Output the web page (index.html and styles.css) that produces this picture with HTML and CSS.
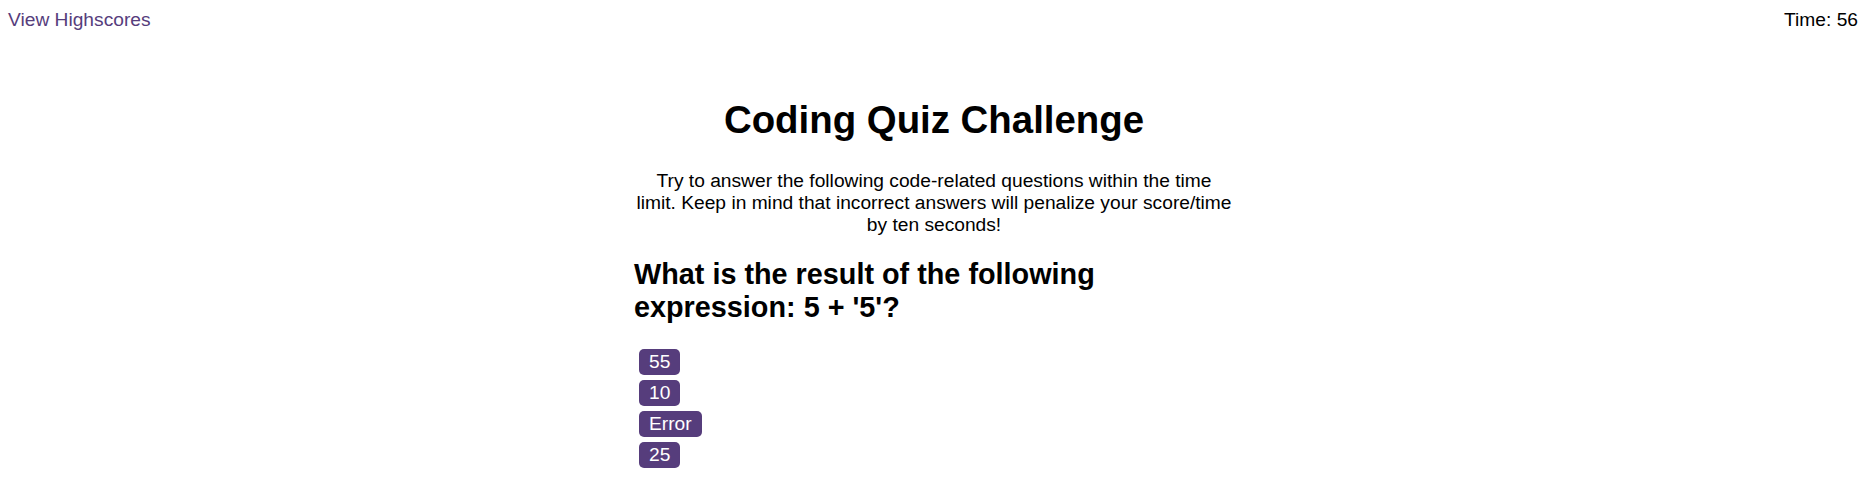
FILE: index.html
```html
<!DOCTYPE html>
<html lang="en">
<head>
<meta charset="utf-8">
<title>Coding Quiz Challenge</title>
<link rel="stylesheet" href="styles.css">
</head>
<body>
<header class="topbar">
  <a class="highscores" href="#">View Highscores</a>
  <div class="timer">Time: <span>56</span></div>
</header>
<main class="quiz">
  <h1 class="quiz-title">Coding Quiz Challenge</h1>
  <p class="quiz-intro">Try to answer the following code-related questions within the time limit. Keep in mind that incorrect answers will penalize your score/time by ten seconds!</p>
  <h2 class="question">What is the result of the following expression: 5 + '5'?</h2>
  <div class="answers">
    <button class="answer">55</button>
    <button class="answer">10</button>
    <button class="answer">Error</button>
    <button class="answer">25</button>
  </div>
</main>
</body>
</html>
```
FILE: styles.css
```css
* { box-sizing: border-box; }

html, body {
  margin: 0;
  padding: 0;
  background: #ffffff;
}

body {
  font-family: "Liberation Sans", Arial, sans-serif;
  font-size: 19.2px;
  color: #000000;
}

.topbar {
  display: flex;
  justify-content: space-between;
  align-items: flex-start;
  padding: 9px 10px 0 8px;
  line-height: 22px;
}

.highscores {
  color: #563d7c;
  text-decoration: none;
}

.timer {
  color: #000000;
}

.quiz {
  width: 600px;
  margin: 0 auto;
  padding-top: 67px;
}

.quiz-title {
  margin: 0 0 28px;
  font-size: 38.4px;
  font-weight: bold;
  line-height: 44px;
  text-align: center;
}

.quiz-intro {
  margin: 0 0 22px;
  padding: 0 2px;
  line-height: 22px;
  text-align: center;
}

.question {
  margin: 0 0 25px;
  font-size: 28.8px;
  font-weight: bold;
  line-height: 33px;
  text-align: left;
  width: 480px;
}

.answers {
  display: flex;
  flex-direction: column;
  align-items: flex-start;
  gap: 5px;
  padding-left: 5px;
}

.answer {
  height: 26px;
  padding: 0 10px;
  border: none;
  border-radius: 5px;
  background: #563d7c;
  color: #ffffff;
  font-family: "Liberation Sans", Arial, sans-serif;
  font-size: 19.2px;
  line-height: 26px;
  cursor: pointer;
}
```
